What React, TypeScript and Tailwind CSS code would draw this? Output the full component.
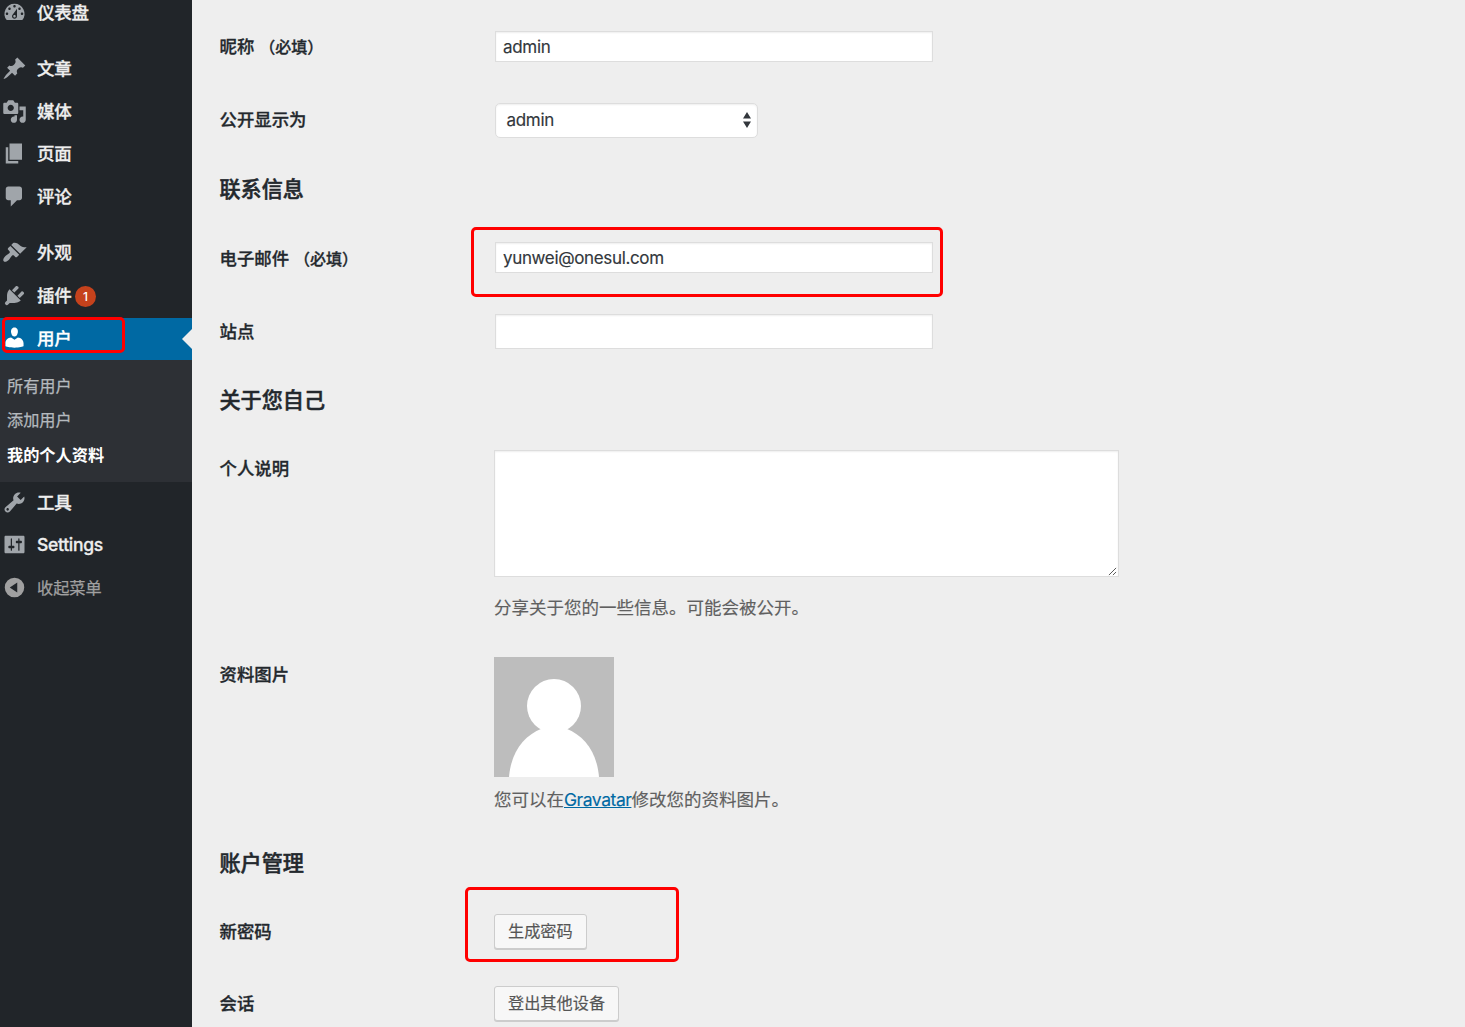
import type { ReactNode } from "react";

const ICONS = {
  dashboard:
    "M3.76 16h12.48A7.998 7.998 0 0 0 10 3a7.998 7.998 0 0 0-6.24 13zM10 4c.55 0 1 .45 1 1s-.45 1-1 1-1-.45-1-1 .45-1 1-1zM6 6c.55 0 1 .45 1 1s-.45 1-1 1-1-.45-1-1 .45-1 1-1zm8 0c.55 0 1 .45 1 1s-.45 1-1 1-1-.45-1-1 .45-1 1-1zm-5.37 5.55L12 7v6c0 1.1-.9 2-2 2s-2-.9-2-2c0-.57.24-1.08.63-1.45zM4 10c.55 0 1 .45 1 1s-.45 1-1 1-1-.45-1-1 .45-1 1-1zm12 0c.55 0 1 .45 1 1s-.45 1-1 1-1-.45-1-1 .45-1 1-1zm-5 3c0-.55-.45-1-1-1s-1 .45-1 1 .45 1 1 1 1-.45 1-1z",
  post: "M10.44 3.02l1.82-1.82 6.36 6.35-1.83 1.82c-1.05-.68-2.48-.57-3.41.36l-.75.75c-.92.93-1.04 2.35-.35 3.41l-1.83 1.82-2.41-2.41-2.8 2.79c-.42.42-3.38 2.71-3.8 2.29s1.86-3.39 2.28-3.81l2.79-2.79L4.1 9.36l1.83-1.82c1.05.69 2.48.57 3.4-.36l.75-.75c.93-.92 1.05-2.35.36-3.41z",
  media:
    "M13 11V4c0-.55-.45-1-1-1h-1.67L9 1H5L3.67 3H2c-.55 0-1 .45-1 1v7c0 .55.45 1 1 1h10c.55 0 1-.45 1-1zM7 4.5c1.38 0 2.5 1.12 2.5 2.5S8.38 9.5 7 9.5 4.5 8.38 4.5 7 5.62 4.5 7 4.5zM14 6h5v10.5c0 1.38-1.12 2.5-2.5 2.5S14 17.88 14 16.5s1.12-2.5 2.5-2.5c.17 0 .34.02.5.05V9h-3V6zm-4 8.05V13h2v3.5c0 1.38-1.12 2.5-2.5 2.5S7 17.88 7 16.5 8.12 14 9.5 14c.17 0 .34.02.5.05z",
  page: "M6 15V2h10v13H6zm-1 1h8v2H3V5h2v11z",
  comments:
    "M5 2h9c1.1 0 2 .9 2 2v7c0 1.1-.9 2-2 2h-2l-5 5v-5H5c-1.1 0-2-.9-2-2V4c0-1.1.9-2 2-2z",
  appearance:
    "M14.48 11.06L7.41 3.99l1.5-1.5c.5-.56 2.3-.47 3.51.32 1.21.8 1.43 1.28 2.91 2.1 1.18.64 2.45 1.26 4.45.85zm-.71.71L6.7 4.7 4.93 6.47c-.39.39-.39 1.02 0 1.41l1.06 1.06c.39.39.39 1.03 0 1.42-.6.6-1.43 1.11-2.21 1.69-.35.26-.7.53-1.01.84C1.43 14.23.4 16.08 1.4 17.07c.99 1 2.84-.03 4.18-1.36.31-.31.58-.66.85-1.02.57-.78 1.08-1.61 1.69-2.21.39-.39 1.02-.39 1.41 0l1.06 1.06c.39.39 1.02.39 1.41 0z",
  plugins:
    "M13.11 4.36L9.87 7.6 8 5.73l3.24-3.24c.35-.34 1.05-.2 1.56.32.52.51.66 1.21.31 1.55zm-8 1.77l.91-1.12 9.01 9.01-1.19.84c-.71.71-2.63 1.16-3.82 1.16H6.14L4.9 17.26c-.59.59-1.54.59-2.12 0a1.49 1.49 0 0 1 0-2.12l1.24-1.24v-3.88c0-1.13.4-3.19 1.09-3.89zm7.26 3.97l3.24-3.24c.34-.35 1.04-.21 1.55.31.52.51.66 1.21.31 1.55l-3.24 3.25z",
  users:
    "M10 9.25c-2.27 0-2.73-3.44-2.73-3.44C7 4.02 7.82 2 9.97 2c2.16 0 2.98 2.02 2.71 3.81 0 0-.41 3.44-2.68 3.44zm0 2.57L12.72 10c2.39 0 4.52 2.33 4.52 4.53v2.49s-3.65 1.13-7.24 1.13c-3.65 0-7.24-1.13-7.24-1.13v-2.49c0-2.25 1.94-4.48 4.47-4.48z",
  tools:
    "M16.68 9.77c-1.34 1.34-3.3 1.67-4.95.99l-5.41 6.52c-.99.99-2.59.99-3.58 0s-.99-2.59 0-3.57l6.52-5.42c-.68-1.65-.35-3.61.99-4.95 1.28-1.28 3.12-1.62 4.72-1.06l-2.89 2.89 2.82 2.82 2.86-2.87c.53 1.58.18 3.39-1.08 4.65zM3.81 16.21c.4.39 1.04.39 1.43 0 .4-.4.4-1.04 0-1.43-.39-.4-1.03-.4-1.43 0-.39.39-.39 1.03 0 1.43z",
  settings:
    "M18 16V4c0-.55-.45-1-1-1H3c-.55 0-1 .45-1 1v12c0 .55.45 1 1 1h14c.55 0 1-.45 1-1zM8 11h1c.55 0 1 .45 1 1s-.45 1-1 1H8v1.5c0 .28-.22.5-.5.5s-.5-.22-.5-.5V13H6c-.55 0-1-.45-1-1s.45-1 1-1h1V5.5c0-.28.22-.5.5-.5s.5.22.5.5V11zm5-2h-1c-.55 0-1-.45-1-1s.45-1 1-1h1V5.5c0-.28.22-.5.5-.5s.5.22.5.5V7h1c.55 0 1 .45 1 1s-.45 1-1 1h-1v5.5c0 .28-.22.5-.5.5s-.5-.22-.5-.5V9z",
  collapse:
    "M10 2.2a7.8 7.8 0 1 0 0 15.6a7.8 7.8 0 0 0 0-15.6zM12.2 6v8L6.2 10z",
};

type IconName = keyof typeof ICONS;

function Icon({ name }: { name: IconName }) {
  return (
    <svg viewBox="0 0 20 20" className="-mt-[1px] ml-[2px] h-[25px] w-[25px] shrink-0" fill="currentColor" fillRule="evenodd">
      <path d={ICONS[name]} />
    </svg>
  );
}

function MenuItem({ icon, label, badge }: { icon: IconName; label: string; badge?: string }) {
  return (
    <a className="flex h-[42.6px] shrink-0 items-center pb-[2px] text-[17.5px] font-medium text-[#eeeeee]">
      <span className="flex text-[#a0a5aa]">
        <Icon name={icon} />
      </span>
      <span className="ml-[10px] tracking-[-0.3px] [-webkit-text-stroke:0.3px]">{label}</span>
      {badge && (
        <span className="ml-[3.5px] mt-[2px] flex h-[21px] w-[21px] items-center justify-center rounded-full bg-[#c5421c] text-[12px] tracking-normal text-white">
          {badge}
        </span>
      )}
    </a>
  );
}

function Sidebar() {
  return (
    <nav className="h-full w-[192px] shrink-0 bg-[#212529]">
      <div className="-mt-[7px] flex flex-col">
        <MenuItem icon="dashboard" label="仪表盘" />
        <div className="h-[13.4px]" />
        <MenuItem icon="post" label="文章" />
        <MenuItem icon="media" label="媒体" />
        <MenuItem icon="page" label="页面" />
        <MenuItem icon="comments" label="评论" />
        <div className="h-[13.4px]" />
        <MenuItem icon="appearance" label="外观" />
        <MenuItem icon="plugins" label="插件" badge="1" />
        <a className="relative flex h-[42px] items-center bg-[#0069a3] pb-[1px] text-[17.5px] font-medium text-white">
          <Icon name="users" />
          <span className="ml-[10px] mt-[1px] tracking-[-0.25px] [-webkit-text-stroke:0.3px]">用户</span>
          <span className="absolute right-0 top-[11px] border-y-[10px] border-r-[10px] border-y-transparent border-r-[#eeeeee]" />
          <span className="absolute left-[2px] top-[-1px] h-[36px] w-[123px] rounded-[5px] border-[3px] border-[#ff0000]" />
        </a>
        <div className="flex h-[122px] flex-col bg-[#2d3035] pl-[7px] pt-[9.3px] text-[16.2px] text-[#b4b9be]">
          <a className="h-[34px] leading-[34.5px] [-webkit-text-stroke:0.25px]">所有用户</a>
          <a className="h-[35px] leading-[34.5px] [-webkit-text-stroke:0.25px]">添加用户</a>
          <a className="h-[34.5px] font-bold leading-[34.5px] text-white">我的个人资料</a>
        </div>
        <div className="flex flex-col pt-[0.5px]">
          <MenuItem icon="tools" label="工具" />
        </div>
        <div className="-mt-[0.5px] flex flex-col">
          <MenuItem icon="settings" label="Settings" />
        </div>
        <a className="flex h-[42.6px] items-center pb-[1px] text-[16.2px] text-[#a0a0a0]">
          <Icon name="collapse" />
          <span className="ml-[10px] [-webkit-text-stroke:0.25px]">收起菜单</span>
        </a>
      </div>
    </nav>
  );
}

const labelText = "text-[17.4px] font-medium leading-[26px] text-[#23282d] [-webkit-text-stroke:0.3px]";

function Row({ label, required, height, children }: { label: string; required?: boolean; height: string; children: ReactNode }) {
  return (
    <div className={`grid shrink-0 grid-cols-[274.5px_1fr] items-center ${height}`}>
      <div className={labelText}>
        {label}
        {required && <span className="ml-[5px] text-[16px]">（必填）</span>}
      </div>
      {children}
    </div>
  );
}

function Heading({ children }: { children: ReactNode }) {
  return (
    <h2 className="h-[63px] shrink-0 pt-[17px] text-[21.1px] font-medium leading-[30px] text-[#23282d] [-webkit-text-stroke:0.5px]">
      {children}
    </h2>
  );
}

const field = "ml-[1px] border border-[#dddddd] bg-white text-[#32373c] shadow-[inset_0_1px_2px_rgba(0,0,0,0.07)] outline-none";
const button =
  "flex h-[35px] items-center rounded-[3px] border border-[#cccccc] bg-[#f7f7f7] px-[13px] text-[16.2px] text-[#555555] shadow-[0_1px_0_#cccccc] [-webkit-text-stroke:0.15px]";

export default function App() {
  return (
    <div className="flex h-[1027px] w-[1465px] overflow-hidden bg-[#eeeeee] font-[Inter,'Noto_Sans_CJK_SC',sans-serif]">
      <Sidebar />
      <main className="flex min-w-0 flex-1 flex-col pl-[27.5px] pt-[10px]">
        <Row label="昵称" required height="h-[73px]">
          <input
            className={`${field} h-[31px] w-[438px] px-[7px] text-[17px] tracking-[-0.3px] [-webkit-text-stroke:0.15px]`}
            defaultValue="admin"
          />
        </Row>
        <Row label="公开显示为" height="h-[74px]">
          <div
            className={`${field} mt-[1px] flex h-[35px] w-[263px] items-center justify-between rounded-[5px] pl-[10.5px] pr-[5px] text-[17px] tracking-[-0.3px] [-webkit-text-stroke:0.15px]`}
          >
            <span>admin</span>
            <svg viewBox="0 0 10 18" className="-mt-[1px] h-[18px] w-[10px]" fill="#32373c">
              <path d="M5 1l4 6.500H1zM5 17l4-6.500H1z" />
            </svg>
          </div>
        </Row>
        <div className="h-[1px] shrink-0" />
        <Heading>联系信息</Heading>
        <Row label="电子邮件" required height="h-[75px]">
          <div className="relative -mt-[2px]">
            <input
              className={`${field} block h-[31px] w-[438px] px-[7px] text-[17px] tracking-[-0.35px] [-webkit-text-stroke:0.15px]`}
              defaultValue="yunwei@onesul.com"
            />
            <span className="absolute left-[-23px] top-[-15px] h-[70px] w-[472px] rounded-[5px] border-[3px] border-[#ff0000]" />
          </div>
        </Row>
        <Row label="站点" height="h-[71px]">
          <input className={`${field} -mt-[1px] h-[35px] w-[438px]`} />
        </Row>
        <div className="h-[2px] shrink-0" />
        <Heading>关于您自己</Heading>
        <div className="grid h-[207px] shrink-0 grid-cols-[274.5px_1fr] pt-[18px]">
          <div className={`${labelText} mt-[6px]`}>个人说明</div>
          <div>
            <div className="flex h-[127px] w-[625px] items-end justify-end border border-[#dddddd] bg-white shadow-[inset_0_1px_2px_rgba(0,0,0,0.07)]">
              <svg viewBox="0 0 10 10" className="mr-[1px] h-[9px] w-[9px]" stroke="#555555" strokeWidth="1.1">
                <path d="M1 9L9 1M5.5 9L9 5.5" />
              </svg>
            </div>
            <p className="mt-[18px] text-[17.5px] leading-[26px] text-[#606060] [-webkit-text-stroke:0.15px]">
              分享关于您的一些信息。可能会被公开。
            </p>
          </div>
        </div>
        <div className="grid h-[193px] shrink-0 grid-cols-[274.5px_1fr] pt-[18px]">
          <div className={`${labelText} mt-[5px]`}>资料图片</div>
          <div>
            <svg viewBox="0 0 120 120" className="block h-[120px] w-[120px] bg-[#bdbdbd]" fill="#ffffff">
              <circle cx="60" cy="49" r="27" />
              <path d="M15 120C17 96 29 79 48 71.500L72 71.500C91 79 103 96 105 120z" />
            </svg>
            <p className="mt-[10px] text-[17.5px] leading-[26px] text-[#606060] [-webkit-text-stroke:0.15px]">
              您可以在<a className="tracking-[-0.45px] text-[#0069a3] underline">Gravatar</a>修改您的资料图片。
            </p>
          </div>
        </div>
        <Heading>账户管理</Heading>
        <Row label="新密码" height="h-[73px]">
          <div className="relative flex">
            <button className={button}>生成密码</button>
            <span className="absolute left-[-29px] top-[-27px] h-[75px] w-[214px] rounded-[5px] border-[3px] border-[#ff0000]" />
          </div>
        </Row>
        <Row label="会话" height="h-[71px]">
          <div className="flex">
            <button className={button}>登出其他设备</button>
          </div>
        </Row>
      </main>
    </div>
  );
}
